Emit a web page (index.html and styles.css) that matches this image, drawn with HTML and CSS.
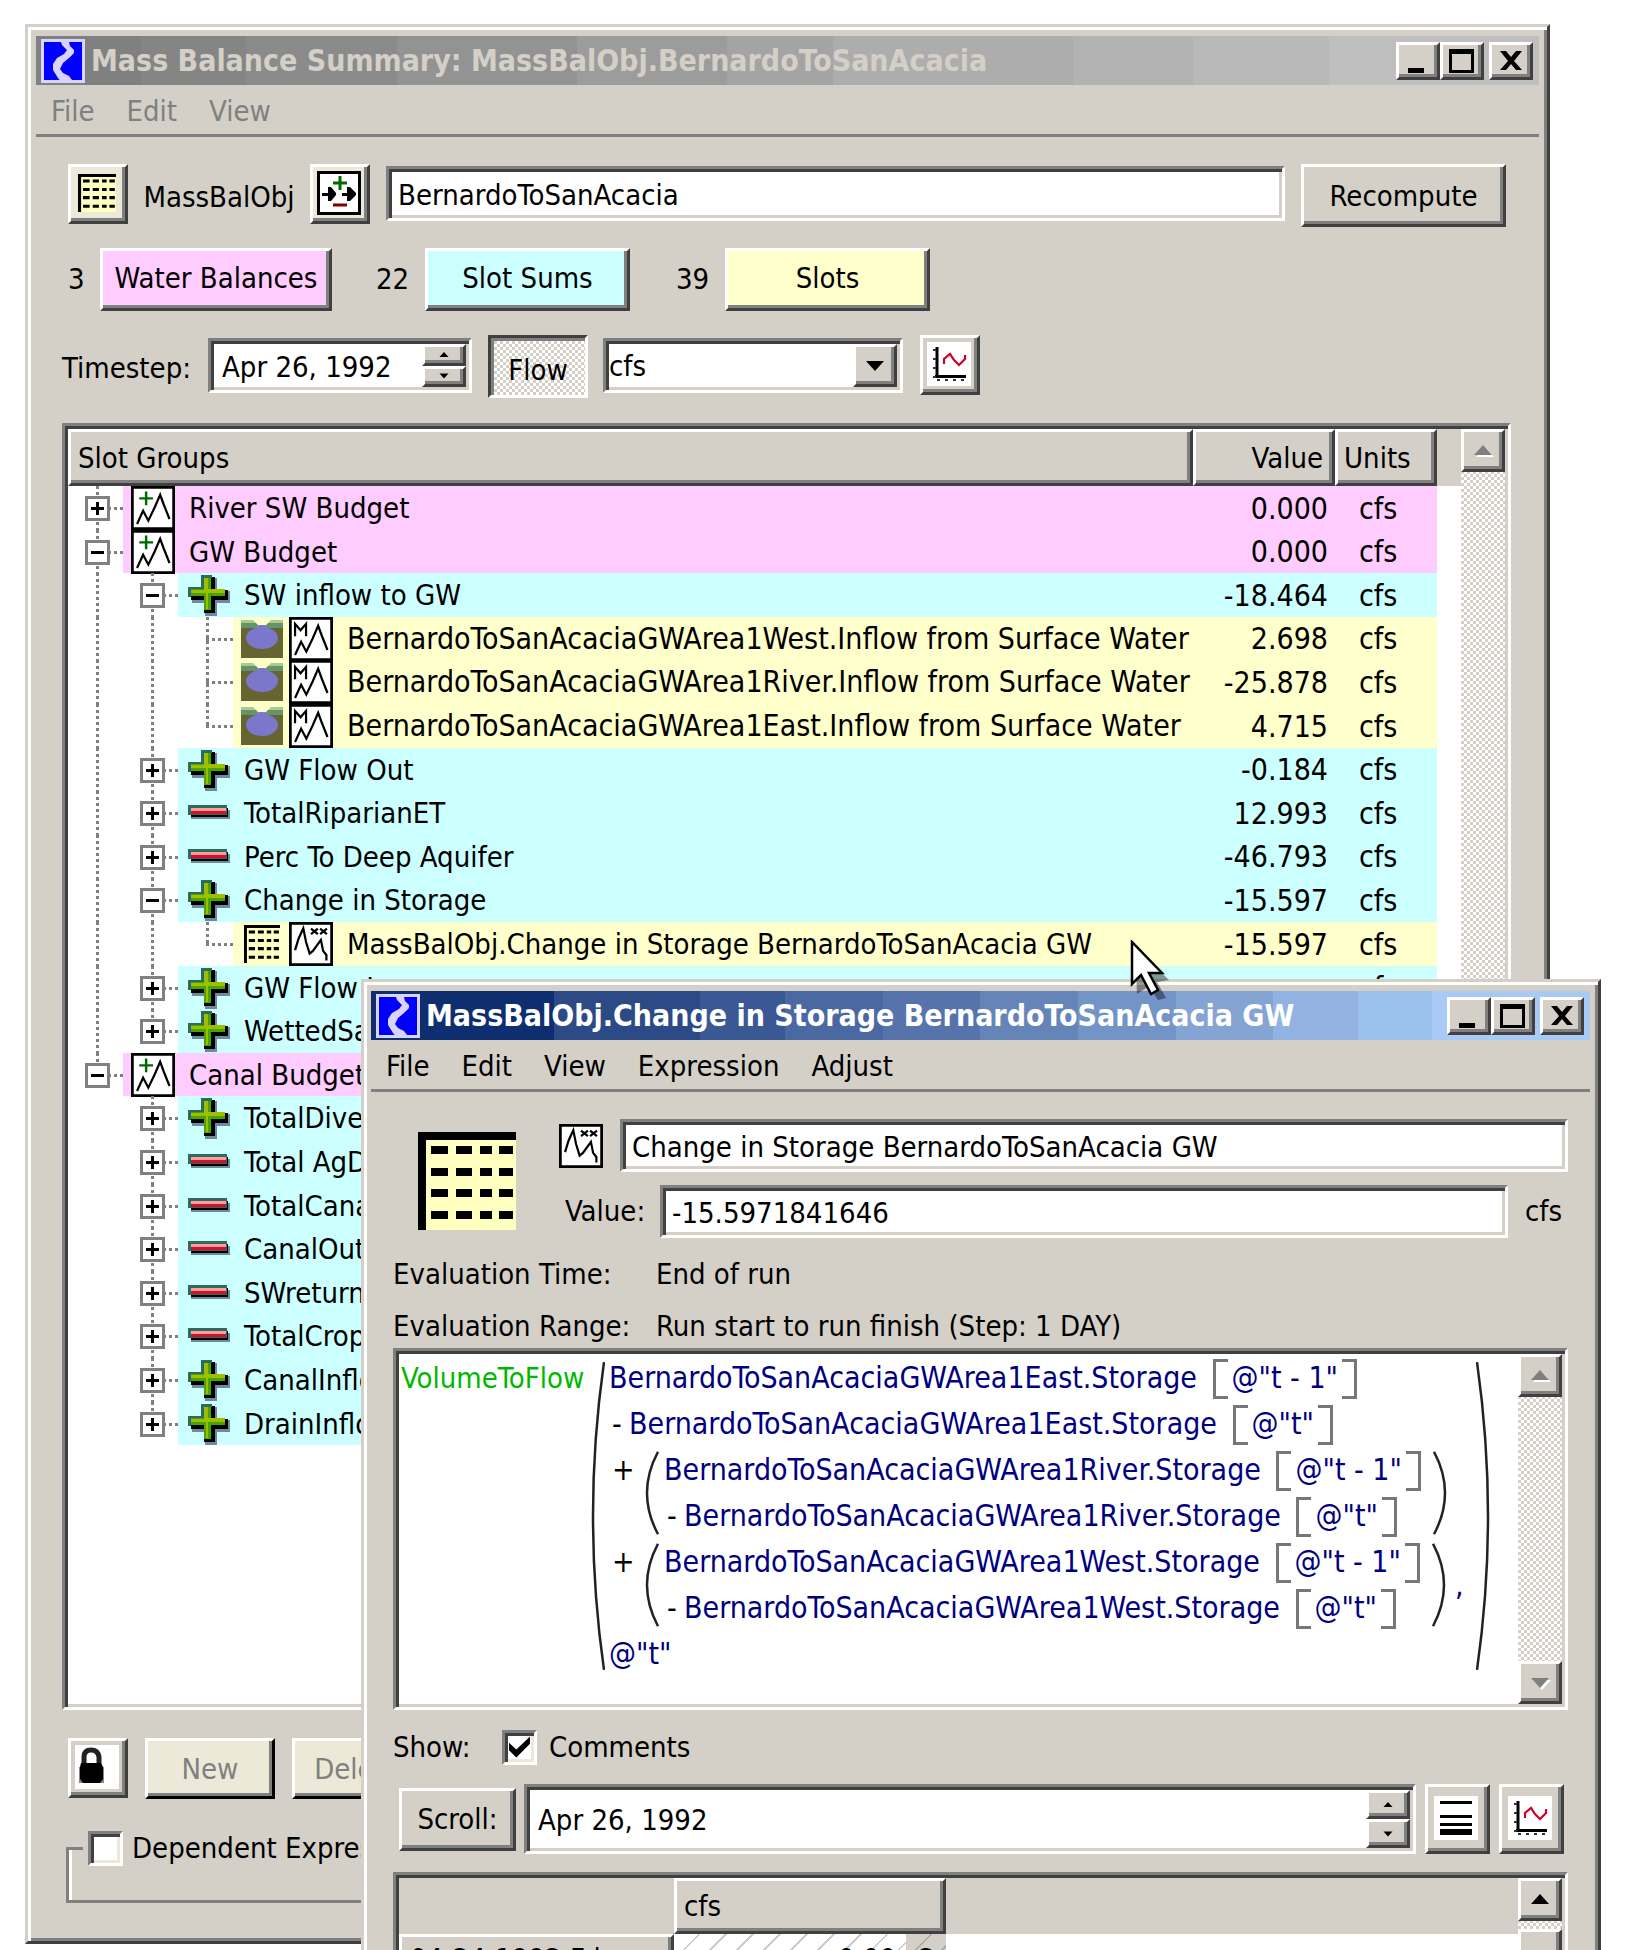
FILE: index.html
```html
<!DOCTYPE html>
<html lang="en">
<head>
<meta charset="utf-8">
<title>Mass Balance Summary</title>
<link rel="stylesheet" href="styles.css">
</head>
<body>
<svg class="sprites" aria-hidden="true">
  <symbol id="logo" viewBox="0 0 44 44"><path fill="#d8d4ff" d="M0 0h44v44H0z"/><path fill="#00f" d="M3 3h38v38H3z"/><path fill="#d8d4ff" d="M20 3h8l1 4 4 4v3l-5 5-6 5-3 6 3 4 6 3 6 8H22l-5-6-5-8v-6l4-6 7-4 3-4-5-5z"/></symbol>
  <symbol id="wave" viewBox="0 0 16 16"><path fill="#fff" stroke="#000" d="M.5.5h15v15H.5z"/><path fill="none" stroke="#000" stroke-width=".8" d="M2.2 13.8 4.4 9l1.9 3.6 2.3-4.8 2-4.6L12 7l2 5"/></symbol>
  <symbol id="wave-sum" viewBox="0 0 16 16"><use href="#wave"/><path fill="none" stroke="#006a00" stroke-width=".9" d="M3 4.5h5M5.500 2v5"/></symbol>
  <symbol id="wave-m" viewBox="0 0 16 16"><use href="#wave"/><path fill="none" stroke="#000" stroke-width=".8" d="M2.200 7V2.500l2 2.300 2-2.300V7"/></symbol>
  <symbol id="wave-x" viewBox="0 0 16 16"><path fill="#fff" stroke="#000" d="M.5.5h15v15H.5z"/><path fill="none" stroke="#000" stroke-width=".8" d="M2.200 10.200 3.500 6l1.700-3.700 1 5L7.500 11.500l1.200-1L11.600 6.500l.8 4 1.200 1.500v2M8 2.400l2.500 2M10.500 2.400l-2.500 2M11.300 2.400l2.500 2M13.800 2.400l-2.500 2"/></symbol>
  <symbol id="pool" viewBox="0 0 42 38"><path fill="#666430" d="M0 0h42v38H0z"/><path fill="#669468" d="M0 0h42v8H0z"/><path fill="#a8cc90" d="M0 0h42v3H0z"/><path fill="#ffffcc" d="M12 0h18l-7 7h-4z"/><ellipse cx="21" cy="18" rx="16" ry="11" fill="#7b78cc"/><path fill="#7b78cc" d="M18 5h6l4 6H14z"/></symbol>
  <symbol id="plus" viewBox="0 0 42 42"><path fill="#6f8a9c" d="M17 4h12v13h13v12H29v13H17V29H4V17h13z"/><path fill="#000" d="M16 3h11v13h13v10H27v13H16V26H3V16h13z"/><path fill="#2e6b5e" d="M13 1h11v3H16v12H3v7H0V13h13z"/><path fill="#4aa400" d="M16 4h7v11h14v7H23v14h-7V22H3v-7h13z"/><path fill="#9cc000" d="M16 4h4v11h17v4H20v16h-2V19H3v-3h13z"/></symbol>
  <symbol id="minus" viewBox="0 0 42 42"><path fill="#6f8a9c" d="M3 18h39v9H3z"/><path fill="#000" d="M3 16h37v9H3z"/><path fill="#2e6b5e" d="M0 13h39v10H0z"/><path fill="#d0102c" d="M3 16h35v6H3z"/><path fill="#ff9c9c" d="M3 16h35v3H3z"/></symbol>
  <symbol id="sheet" viewBox="0 0 98 98" preserveAspectRatio="none"><path fill="#ffffc0" d="M0 0h98v98H0z"/><path d="M0 0h98v8H8v90H0z"/><path stroke="#000" stroke-width="8" d="M13 18h17M38 18h16M62 18h12M81 18h14M13 40h17M38 40h16M62 40h12M81 40h14M13 61h17M38 61h16M62 61h12M81 61h14M13 83h17M38 83h16M62 83h12M81 83h14"/></symbol>
  <symbol id="balance" viewBox="0 0 44 44"><path fill="#fff" stroke="#000" stroke-width="3" d="M1.500 1.500h41v41h-41z"/><path stroke="#006a00" stroke-width="3" d="M16 12h14M23 5v14"/><path stroke="#800000" stroke-width="3" d="M16 34h14"/><path d="M5 22h6v-6h3l5 6v2l-5 6h-3v-5H5zM25 22h5v-6h3l6 6v2l-6 6h-3v-5h-5z"/></symbol>
  <symbol id="chart" viewBox="0 0 44 44"><path fill="#fff" d="M0 0h44v44H0z"/><path fill="none" stroke="#000" stroke-width="3" d="M10 5v29M8 34.500h31"/><path stroke="#333" stroke-width="2" d="M6 8h3M6 17h3M6 26h3M6 35h3M10 38h3M18 38h3M26 38h3M34 38h3"/><path fill="none" stroke="#d0002c" stroke-width="2.200" d="M17 22v-5l6-5 4 6 5 5 6-6v-4"/></symbol>
  <symbol id="lines" viewBox="0 0 44 44"><path fill="#fff" d="M0 0h44v44H0z"/><path d="M6 5h32v3H6zM6 19h32v3H6zM6 27h32v3H6zM6 33h32v6H6z"/></symbol>
  <symbol id="lock" viewBox="0 0 44 44"><path fill="#fff" d="M0 0h44v44H0z"/><path fill="none" stroke="#222" stroke-width="5" d="M9 20v-8q0-7 7-7t8 7v8"/><path fill="#888" d="M4 22h25v16H4z"/><path d="M6 18h20l2 4v12l-3 4H8l-3-4V22z"/></symbol>
  <symbol id="min" viewBox="0 0 32 28"><path d="M6 21h16v5H6z"/></symbol>
  <symbol id="max" viewBox="0 0 32 28"><path fill-rule="evenodd" d="M3 2h25v24H3zm3 5v16h19V7z"/></symbol>
  <symbol id="close" viewBox="0 0 32 28"><path d="M5 4h6l5 6 5-6h6l-8 10 8 9h-6l-5-6-5 6H5l8-9z"/></symbol>
  <symbol id="up" viewBox="0 0 20 12"><path d="M10 0l9 10H1z"/></symbol>
  <symbol id="down" viewBox="0 0 20 12"><path d="M10 11l9-10H1z"/></symbol>
  <symbol id="open-paren" viewBox="0 0 14 100" preserveAspectRatio="none"><path fill="none" stroke="#222" stroke-width="2.500" vector-effect="non-scaling-stroke" d="M13 1Q-9 50 13 99"/></symbol>
  <symbol id="close-paren" viewBox="0 0 14 100" preserveAspectRatio="none"><path fill="none" stroke="#222" stroke-width="2.500" vector-effect="non-scaling-stroke" d="M1 1Q23 50 1 99"/></symbol>
</svg>

<div class="desktop">
<main class="window summary">
  <header class="titlebar inactive">
    <svg class="logo"><use href="#logo"/></svg>
    <h1>Mass Balance Summary: MassBalObj.BernardoToSanAcacia</h1>
    <button class="raised" aria-label="Minimize"><svg><use href="#min"/></svg></button><button class="raised" aria-label="Maximize"><svg><use href="#max"/></svg></button><button class="raised shut" aria-label="Close"><svg><use href="#close"/></svg></button>
  </header>
  <nav class="menubar muted"><button>File</button><button>Edit</button><button>View</button></nav>
  <div class="content">
    <div class="bar">
      <button class="raised tool cream" aria-label="Open object"><svg class="small-sheet"><use href="#sheet"/></svg></button>
      <label class="object-label" for="object-name">MassBalObj</label>
      <button class="raised tool cream" aria-label="Balance"><svg><use href="#balance"/></svg></button>
      <input class="sunken grow" id="object-name" value="BernardoToSanAcacia">
      <button class="raised wide">Recompute</button>
    </div>
    <div class="bar counts">
      <span>3</span><button class="raised balances">Water Balances</button>
      <span>22</span><button class="raised sums">Slot Sums</button>
      <span>39</span><button class="raised slots">Slots</button>
    </div>
    <div class="bar time">
      <label for="timestep">Timestep:</label>
      <span class="sunken spin"><input id="timestep" value="Apr 26, 1992"><span class="steps"><button class="raised" aria-label="Later"><svg><use href="#up"/></svg></button><button class="raised" aria-label="Earlier"><svg><use href="#down"/></svg></button></span></span>
      <button class="pressed">Flow</button>
      <span class="sunken combo"><select aria-label="Units"><option>cfs</option></select><span class="raised arrow"><svg><use href="#down"/></svg></span></span>
      <button class="raised tool" aria-label="Plot"><svg><use href="#chart"/></svg></button>
    </div>
    <div class="sunken tree">
      <div class="tree-body">
      <table>
        <thead><tr><th>Slot Groups</th><th class="num">Value</th><th>Units</th><th class="filler"></th></tr></thead>
        <tbody>
        <tr class="pink"><td><div class="item"><i class="g v h"><b class="box more"></b></i><span class="name"><svg><use href="#wave-sum"/></svg>River SW Budget</span></div></td><td>0.000</td><td>cfs</td><td></td></tr>
        <tr class="pink"><td><div class="item"><i class="g v h"><b class="box"></b></i><span class="name"><svg><use href="#wave-sum"/></svg>GW Budget</span></div></td><td>0.000</td><td>cfs</td><td></td></tr>
        <tr class="cyan"><td><div class="item"><i class="g v"></i><i class="g v h"><b class="box"></b></i><span class="name"><svg><use href="#plus"/></svg>SW inflow to GW</span></div></td><td>-18.464</td><td>cfs</td><td></td></tr>
        <tr class="yellow area"><td><div class="item"><i class="g v"></i><i class="g v"></i><i class="g v h"></i><span class="name"><svg class="pool"><use href="#pool"/></svg><svg><use href="#wave-m"/></svg>BernardoToSanAcaciaGWArea1West.Inflow from Surface Water</span></div></td><td>2.698</td><td>cfs</td><td></td></tr>
        <tr class="yellow area"><td><div class="item"><i class="g v"></i><i class="g v"></i><i class="g v h"></i><span class="name"><svg class="pool"><use href="#pool"/></svg><svg><use href="#wave-m"/></svg>BernardoToSanAcaciaGWArea1River.Inflow from Surface Water</span></div></td><td>-25.878</td><td>cfs</td><td></td></tr>
        <tr class="yellow area"><td><div class="item"><i class="g v"></i><i class="g v"></i><i class="g v h last"></i><span class="name"><svg class="pool"><use href="#pool"/></svg><svg><use href="#wave-m"/></svg>BernardoToSanAcaciaGWArea1East.Inflow from Surface Water</span></div></td><td>4.715</td><td>cfs</td><td></td></tr>
        <tr class="cyan"><td><div class="item"><i class="g v"></i><i class="g v h"><b class="box more"></b></i><span class="name"><svg><use href="#plus"/></svg>GW Flow Out</span></div></td><td>-0.184</td><td>cfs</td><td></td></tr>
        <tr class="cyan"><td><div class="item"><i class="g v"></i><i class="g v h"><b class="box more"></b></i><span class="name"><svg><use href="#minus"/></svg>TotalRiparianET</span></div></td><td>12.993</td><td>cfs</td><td></td></tr>
        <tr class="cyan"><td><div class="item"><i class="g v"></i><i class="g v h"><b class="box more"></b></i><span class="name"><svg><use href="#minus"/></svg>Perc To Deep Aquifer</span></div></td><td>-46.793</td><td>cfs</td><td></td></tr>
        <tr class="cyan"><td><div class="item"><i class="g v"></i><i class="g v h"><b class="box"></b></i><span class="name"><svg><use href="#plus"/></svg>Change in Storage</span></div></td><td>-15.597</td><td>cfs</td><td></td></tr>
        <tr class="yellow"><td><div class="item"><i class="g v"></i><i class="g v"></i><i class="g v h last"></i><span class="name"><svg class="pool sheet"><use href="#sheet"/></svg><svg><use href="#wave-x"/></svg>MassBalObj.Change in Storage BernardoToSanAcacia GW</span></div></td><td>-15.597</td><td>cfs</td><td></td></tr>
        <tr class="cyan"><td><div class="item"><i class="g v"></i><i class="g v h"><b class="box more"></b></i><span class="name"><svg><use href="#plus"/></svg>GW Flow In</span></div></td><td></td><td>cfs</td><td></td></tr>
        <tr class="cyan"><td><div class="item"><i class="g v"></i><i class="g v h last"><b class="box more"></b></i><span class="name"><svg><use href="#plus"/></svg>WettedSands</span></div></td><td></td><td></td><td></td></tr>
        <tr class="pink"><td><div class="item"><i class="g v h last"><b class="box"></b></i><span class="name"><svg><use href="#wave-sum"/></svg>Canal Budget</span></div></td><td></td><td></td><td></td></tr>
        <tr class="cyan"><td><div class="item"><i class="g"></i><i class="g v h"><b class="box more"></b></i><span class="name"><svg><use href="#plus"/></svg>TotalDiversions</span></div></td><td></td><td></td><td></td></tr>
        <tr class="cyan"><td><div class="item"><i class="g"></i><i class="g v h"><b class="box more"></b></i><span class="name"><svg><use href="#minus"/></svg>Total AgDepletion</span></div></td><td></td><td></td><td></td></tr>
        <tr class="cyan"><td><div class="item"><i class="g"></i><i class="g v h"><b class="box more"></b></i><span class="name"><svg><use href="#minus"/></svg>TotalCanalSeepage</span></div></td><td></td><td></td><td></td></tr>
        <tr class="cyan"><td><div class="item"><i class="g"></i><i class="g v h"><b class="box more"></b></i><span class="name"><svg><use href="#minus"/></svg>CanalOutflow</span></div></td><td></td><td></td><td></td></tr>
        <tr class="cyan"><td><div class="item"><i class="g"></i><i class="g v h"><b class="box more"></b></i><span class="name"><svg><use href="#minus"/></svg>SWreturn</span></div></td><td></td><td></td><td></td></tr>
        <tr class="cyan"><td><div class="item"><i class="g"></i><i class="g v h"><b class="box more"></b></i><span class="name"><svg><use href="#minus"/></svg>TotalCrop</span></div></td><td></td><td></td><td></td></tr>
        <tr class="cyan"><td><div class="item"><i class="g"></i><i class="g v h"><b class="box more"></b></i><span class="name"><svg><use href="#plus"/></svg>CanalInflow</span></div></td><td></td><td></td><td></td></tr>
        <tr class="cyan"><td><div class="item"><i class="g"></i><i class="g v h last"><b class="box more"></b></i><span class="name"><svg><use href="#plus"/></svg>DrainInflow</span></div></td><td></td><td></td><td></td></tr>
        </tbody>
      </table>
      </div>
      <div class="scrollbar"><button class="raised off" aria-label="Scroll up"><svg><use href="#up"/></svg></button></div>
    </div>
    <div class="bar footer">
      <button class="raised tool" aria-label="Lock"><svg><use href="#lock"/></svg></button>
      <button class="raised cream edit" disabled>New</button>
      <button class="raised cream edit" disabled>Delete</button>
    </div>
    <fieldset><legend><input type="checkbox" id="dependent"><label for="dependent">Dependent Expressions</label></legend></fieldset>
  </div>
</main>

<section class="window slot">
  <header class="titlebar active">
    <svg class="logo"><use href="#logo"/></svg>
    <h2>MassBalObj.Change in Storage BernardoToSanAcacia GW</h2>
    <button class="raised" aria-label="Minimize"><svg><use href="#min"/></svg></button><button class="raised" aria-label="Maximize"><svg><use href="#max"/></svg></button><button class="raised shut" aria-label="Close"><svg><use href="#close"/></svg></button>
  </header>
  <nav class="menubar"><button>File</button><button>Edit</button><button>View</button><button>Expression</button><button>Adjust</button></nav>
  <div class="content">
    <div class="head">
      <svg class="big-sheet"><use href="#sheet"/></svg>
      <div class="fields">
        <div class="field"><svg><use href="#wave-x"/></svg><input class="sunken grow" aria-label="Slot name" value="Change in Storage BernardoToSanAcacia GW"></div>
        <div class="field value"><label for="slot-value">Value:</label><input class="sunken grow" id="slot-value" value="-15.5971841646"><span class="unit">cfs</span></div>
      </div>
    </div>
    <dl class="facts"><dt>Evaluation Time:</dt><dd>End of run</dd><dt>Evaluation Range:</dt><dd>Run start to run finish (Step: 1 DAY)</dd></dl>
    <div class="sunken editor">
      <div class="expr">
        <span class="fn">VolumeToFlow</span>
        <svg class="paren"><use href="#open-paren"/></svg>
        <div class="terms">
          <div class="line">BernardoToSanAcaciaGWArea1East.Storage <span class="index">@"t - 1"</span></div>
          <div class="line"><span class="op">-</span>BernardoToSanAcaciaGWArea1East.Storage <span class="index">@"t"</span></div>
          <div class="group"><span class="op add">+</span><svg class="paren"><use href="#open-paren"/></svg>
            <div><div class="line">BernardoToSanAcaciaGWArea1River.Storage <span class="index">@"t - 1"</span></div>
            <div class="line"><span class="op">-</span>BernardoToSanAcaciaGWArea1River.Storage <span class="index">@"t"</span></div></div>
            <svg class="paren"><use href="#close-paren"/></svg></div>
          <div class="group"><span class="op add">+</span><svg class="paren"><use href="#open-paren"/></svg>
            <div><div class="line">BernardoToSanAcaciaGWArea1West.Storage <span class="index">@"t - 1"</span></div>
            <div class="line"><span class="op">-</span>BernardoToSanAcaciaGWArea1West.Storage <span class="index">@"t"</span></div></div>
            <svg class="paren"><use href="#close-paren"/></svg><span class="comma">,</span></div>
          <div class="line">@"t"</div>
        </div>
        <svg class="paren"><use href="#close-paren"/></svg>
      </div>
      <div class="scrollbar"><button class="raised off" aria-label="Scroll up"><svg><use href="#up"/></svg></button><button class="raised off" aria-label="Scroll down"><svg><use href="#down"/></svg></button></div>
    </div>
    <div class="show"><span>Show:</span><input type="checkbox" id="comments" checked><label for="comments">Comments</label></div>
    <div class="scroll-row">
      <button class="raised scroll-to">Scroll:</button>
      <span class="sunken spin grow"><input aria-label="Scroll date" value="Apr 26, 1992"><span class="steps"><button class="raised" aria-label="Later"><svg><use href="#up"/></svg></button><button class="raised" aria-label="Earlier"><svg><use href="#down"/></svg></button></span></span>
      <button class="raised tool" aria-label="Rows"><svg><use href="#lines"/></svg></button>
      <button class="raised tool" aria-label="Plot"><svg><use href="#chart"/></svg></button>
    </div>
    <div class="sunken series">
      <div class="series-body">
      <table><colgroup><col class="dates"><col class="values"><col class="flags"><col></colgroup>
      <thead><tr><td></td><th class="raised" colspan="2">cfs</th><td></td></tr></thead>
      <tbody><tr><th class="raised">04-24-1992 Fri</th><td class="hatch">0.00</td><td class="hatch flag">O</td><td class="blank"></td></tr></tbody></table>
      </div>
      <div class="scrollbar"><button class="raised" aria-label="Scroll up"><svg><use href="#up"/></svg></button><span class="raised thumb"></span></div>
    </div>
  </div>
</section>
<svg class="pointer" viewBox="0 0 42 60"><path fill="#0006" d="M5 8l34 32-12 2 9 16-8 2-9-14-12 8z"/><path fill="#fff" stroke="#000" stroke-width="2.500" d="M2 2v42l9-9 10 19 7-4-9-17h13z"/></svg>
</div>
</body>
</html>
```
FILE: styles.css
```css
* { box-sizing: border-box; }
body { margin: 0; background: #fff; color: #000; font: 29px/36px "DejaVu Sans Condensed", "DejaVu Sans", sans-serif; font-stretch: condensed; }
button, input, select { font: inherit; font-stretch: condensed; color: inherit; margin: 0; padding: 0; border: 0; background: none; border-radius: 0; outline: 0; }
input, select { min-width: 0; appearance: none; }
svg { display: block; flex: none; }
.sprites { position: absolute; width: 0; height: 0; }
.desktop { position: relative; display: flex; flex-direction: column; height: 100vh; overflow: hidden; padding: 24px 75px 6px 25px; }
.grow { flex: 1; }

/* 3-D edges */
.raised { background: #d4d0c8; border: 3px solid; border-color: #fff #404040 #404040 #fff; box-shadow: inset -3px -3px #808080; }
.sunken { background: #fff; border: 3px solid; border-color: #808080 #fff #fff #808080; box-shadow: inset 3px 3px #404040, inset -3px -3px #d4d0c8; }
.cream { background: #ece9d8; }
.window { display: flex; flex-direction: column; background: #d4d0c8; border: 3px solid; border-color: #d4d0c8 #404040 #404040 #d4d0c8; box-shadow: inset 3px 3px #fff, inset -3px -3px #808080; padding: 9px 8px 8px; }
.summary { flex: 1; }
.slot { position: absolute; left: 361px; right: 24px; top: 979px; padding-left: 7px; }

.titlebar { display: flex; align-items: center; height: 49px; padding: 0 6px 0 5px; }
.titlebar h1, .titlebar h2 { flex: 1; margin: 0 0 0 6px; font-size: 30px; font-weight: bold; white-space: nowrap; }
.titlebar .logo { width: 44px; height: 44px; }
.titlebar button { width: 44px; height: 38px; }
.titlebar button svg { width: 32px; height: 28px; margin: 0 auto; }
.titlebar .shut { margin-left: 5px; }
.inactive { color: #d4d0c8; background: linear-gradient(90deg, #808080 7%, #858585 0 14%, #8b8b8b 0 24%, #939393 0 36%, #9c9c9c 0 46%, #a4a4a4 0 53%, #adadad 0 69%, #b3b3b3 0 77%, #b9b9b9 0 86%, #bfbfbf 0); }
.active { color: #fff; background: linear-gradient(90deg, #0e2e70 15%, #2b4a86 0 27%, #3a5893 0 34%, #4a69a2 0 42%, #5674ab 0 50%, #6585b8 0 58%, #7294c6 0 66%, #84a4d4 0 74%, #92b3e2 0 81%, #9cc0ec 0 87%, #a8caf4 0); }
.menubar { display: flex; gap: 32px; height: 52px; padding: 3px 15px 0; border-bottom: 3px solid #808080; }
.muted { color: #808080; }

.content { display: flex; flex-direction: column; flex: 1; }
.summary .content { padding: 27px 28px 30px 26px; }
.bar { display: flex; height: 63px; }
.tool { width: 60px; height: 60px; display: flex; align-items: center; justify-content: center; padding: 0 3px 3px 0; }
.tool svg { width: 44px; height: 44px; }
.tool .small-sheet { width: 38px; height: 38px; }
.bar > .sunken { height: 55px; margin-top: 2px; }
.bar:first-child { padding: 0 5px 0 6px; }
.object-label { line-height: 66px; width: 182px; text-align: center; }
input.sunken { padding: 3px 9px 0; }
#object-name { margin: 2px 16px 0; }
.wide { width: 205px; }
.counts { margin-top: 21px; padding-left: 6px; line-height: 63px; }
.counts span { width: 49px; }
.counts span:first-child { width: 32px; }
.counts button { width: 205px; margin-right: 46px; padding-bottom: 3px; line-height: 36px; }
.counts .balances { width: 232px; margin-right: 44px; background: #fcf; }
.counts .slots { margin-right: 0; }
.sums { background: #cff; }
.slots { background: #ffc; }
.time { margin: 24px 0 25px; line-height: 66px; }
.time label { width: 146px; }
.spin, .combo { display: flex; padding: 3px; }
.spin > input { flex: 1; padding: 2px 0 0 8px; }
.time .spin { width: 264px; margin: 3px 16px 0 0; }
.time .combo { width: 300px; margin: 3px 17px 0 15px; }
.steps { width: 44px; display: flex; flex-direction: column; }
.steps button { flex: 1; display: flex; align-items: center; justify-content: center; }
.steps svg { width: 10px; height: 6px; }
.pressed { width: 100px; line-height: 36px; border: 3px solid; border-color: #404040 #fff #fff #404040; box-shadow: inset 3px 3px #808080; background: repeating-conic-gradient(#fff 0 25%, #d4d0c8 0 50%) 0 0 / 6px 6px; padding-top: 6px; }
.combo select { flex: 1; line-height: 36px; }
.arrow { width: 44px; display: flex; align-items: center; justify-content: center; }
.arrow svg { width: 20px; height: 12px; }

/* Slot tree */
.tree { flex: 1; display: flex; padding: 3px; min-height: 0; }
.tree-body { flex: 1; overflow: hidden; }
table { border-collapse: separate; border-spacing: 0; width: 100%; table-layout: fixed; }
th, td { padding: 0; font-weight: normal; text-align: left; white-space: nowrap; }
.tree th { height: 57px; padding: 0 9px; background: #d4d0c8; border: 3px solid; border-color: #fff #404040 #404040 #fff; box-shadow: inset -3px -3px #808080; }
.tree th:first-child { padding-left: 7px; }
.tree th:nth-child(2) { width: 142px; text-align: right; }
.tree th:nth-child(3) { width: 102px; padding: 0 0 0 6px; }
.tree .filler { width: 24px; padding: 0; border: 0; box-shadow: none; }
.item { display: flex; height: 44px; line-height: 46px; }
tr:nth-child(5n+2) .item, tr:nth-child(5n+4) .item { height: 43px; }
.tree td { line-height: 43px; }
.tree td:nth-child(2), .tree td:nth-child(3), .area .name { font-size: 30px; }
.tree td:nth-child(2) { text-align: right; padding-right: 7px; }
.tree td:nth-child(3) { padding-left: 24px; }
.pink .name, .pink td:nth-child(2), .pink td:nth-child(3) { background: #fcf; }
.cyan .name, .cyan td:nth-child(2), .cyan td:nth-child(3) { background: #cff; }
.yellow .name, .yellow td:nth-child(2), .yellow td:nth-child(3) { background: #ffc; }
.name { flex: 1; display: flex; align-items: center; padding-left: 8px; }
.name svg { width: 44px; height: 44px; margin-right: 14px; }
.cyan .name { padding-left: 10px; }
.cyan .name svg { width: 42px; height: 42px; }
.name .pool { width: 42px; height: 38px; margin-right: 6px; }
.name .sheet { padding: 0 3px; }
.g { position: relative; flex: none; width: 55px; }
.g.v { background: repeating-linear-gradient(#808080 0 3px, #fff 0 6px) 28px 0 / 3px 100% no-repeat; }
.g.v.last { background-size: 3px 50%; }
.g.h::before { content: ""; position: absolute; left: 28px; right: 0; top: 21px; height: 3px; background: repeating-linear-gradient(90deg, #808080 0 3px, #fff 0 6px); }
.box { position: absolute; left: 17px; top: 10px; width: 25px; height: 25px; border: 3px solid #808080; background: linear-gradient(#000, #000) center / 13px 3px no-repeat #fff; }
.more { background: linear-gradient(#000, #000) center / 13px 3px no-repeat, linear-gradient(#000, #000) center / 3px 13px no-repeat #fff; }
.scrollbar { width: 44px; flex: none; display: flex; flex-direction: column; justify-content: space-between; background: repeating-conic-gradient(#fff 0 25%, #d4d0c8 0 50%) 0 0 / 6px 6px; }
.scrollbar button { height: 43px; display: flex; align-items: center; justify-content: center; }
.scrollbar svg { width: 20px; height: 12px; }
.off svg { fill: #808080; filter: drop-shadow(2px 2px #fff); }

.footer { margin-top: 28px; gap: 17px; padding-left: 6px; height: 61px; }
.edit { width: 130px; border-color: #fff #000 #000 #fff; color: #808080; }
fieldset { margin: 31px 0 0 4px; padding: 0 0 34px 14px; min-width: 0; border: 3px solid #808080; box-shadow: inset 3px 0 #fff; }
legend { display: flex; align-items: center; gap: 9px; padding: 0 5px; }
[type="checkbox"] { width: 35px; height: 35px; background: #fff; border: 3px solid; border-color: #808080 #fff #fff #808080; box-shadow: inset 3px 3px #404040, inset -3px -3px #ece9d8; display: grid; place-items: center; }
[type="checkbox"]:checked::before { content: ""; width: 21px; height: 21px; background: #000; clip-path: polygon(0 30%, 35% 62%, 100% 0, 100% 35%, 35% 100%, 0 65%); }

/* Slot window */
.slot .content { padding: 27px 22px 60px; }
.head { display: flex; }
.big-sheet { width: 98px; height: 98px; margin: 13px 43px 0 25px; }
.fields { flex: 1; display: flex; flex-direction: column; gap: 13px; }
.field { display: flex; height: 53px; }
.field > svg { width: 44px; height: 44px; margin: 5px 17px 0 0; }
.value { padding-left: 6px; line-height: 52px; }
.value label { width: 95px; }
.unit { width: 60px; padding-left: 17px; }
.facts { display: grid; grid-template-columns: 263px 1fr; row-gap: 16px; margin: 18px 0 4px; }
.facts dd { margin: 0; }
.editor { display: flex; justify-content: space-between; height: 362px; padding: 3px; }
.editor .expr { display: flex; align-self: flex-start; padding-top: 1px; color: #000080; font-size: 30px; line-height: 46px; white-space: nowrap; }
.fn { color: #00b800; width: 192px; padding-left: 2px; font-size: 29px; }
.expr > .paren { width: 14px; height: 314px; margin-top: 4px; }
.terms { padding: 0 12px 0 4px; }
.line { height: 46px; }
.group { display: flex; }
.group .paren { width: 14px; height: 84px; margin: 4px 5px 4px 0; }
.group .paren:last-of-type { margin-left: 12px; }
.op { display: inline-block; width: 20px; padding-left: 3px; color: #000; }
.add { width: 36px; }
.comma { line-height: 92px; padding-left: 4px; }
.index { position: relative; display: inline-block; height: 40px; line-height: 38px; margin-left: 7px; padding: 0 19px; }
.index::before, .index::after { content: ""; position: absolute; top: 0; bottom: 0; width: 12px; border: 3px solid #777; }
.index::before { left: 0; border-right: 0; }
.index::after { right: 0; border-left: 0; }
.show { display: flex; align-items: center; margin: 19px 0; }
.show span { width: 109px; }
.show label { margin-left: 12px; }
.scroll-row { display: flex; align-items: center; height: 70px; padding: 0 4px 0 6px; }
.scroll-to { width: 117px; height: 63px; margin-right: 8px; }
.scroll-row .spin { height: 70px; }
.scroll-row .tool { width: 65px; height: 70px; margin-left: 9px; }
.series { display: flex; height: 220px; margin-top: 18px; padding: 3px; }
.series-body { flex: 1; overflow: hidden; }
.series thead { background: #d4d0c8; }
.dates { width: 275px; }
.values { width: 232px; }
.flags { width: 40px; }
.series thead th { height: 56px; padding-left: 7px; }
.series tbody th, .series tbody td { height: 50px; padding-left: 8px; }
.series .hatch { text-align: right; padding-right: 10px; background: repeating-linear-gradient(135deg, #fff 0 17px, #ccc 0 19px); }
.series .flag { background: repeating-linear-gradient(135deg, #d4d0c8 0 17px, #aaa 0 19px); }
.series .scrollbar { justify-content: flex-start; gap: 8px; }
.thumb { height: 100px; }
.pointer { position: absolute; left: 1130px; top: 940px; width: 42px; height: 60px; }
```
